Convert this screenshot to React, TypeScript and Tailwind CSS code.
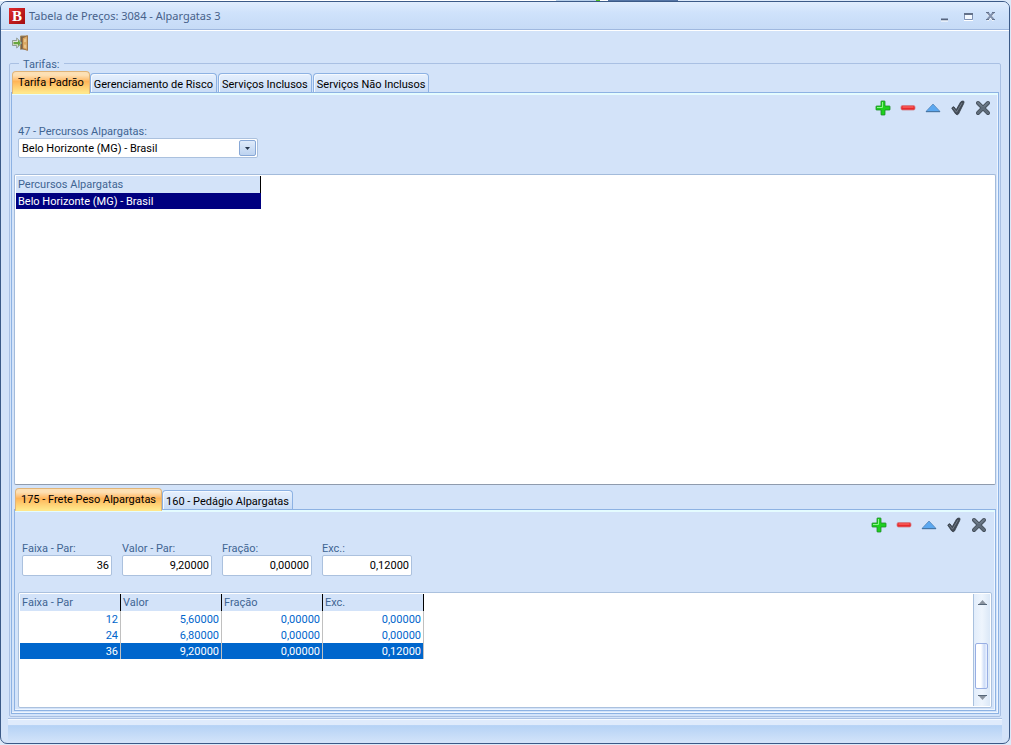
import { useState } from 'react'
import { clsx } from 'clsx'

const mainTabs = ['Tarifa Padrão', 'Gerenciamento de Risco', 'Serviços Inclusos', 'Serviços Não Inclusos']
const priceTabs = ['175 - Frete Peso Alpargatas', '160 - Pedágio Alpargatas']

const routes = ['Belo Horizonte (MG) - Brasil']

const columns = ['Faixa - Par', 'Valor', 'Fração', 'Exc.']
const rates = [
  ['12', '5,60000', '0,00000', '0,00000'],
  ['24', '6,80000', '0,00000', '0,00000'],
  ['36', '9,20000', '0,00000', '0,12000'],
]

const fields = [
  { id: 'faixa', label: 'Faixa - Par:' },
  { id: 'valor', label: 'Valor - Par:' },
  { id: 'fracao', label: 'Fração:' },
  { id: 'exc', label: 'Exc.:' },
]

function DoorIcon() {
  return (
    <svg width="18" height="16" viewBox="0 0 18 16">
      <path d="M8.500 14.500V1H15v13.500" fill="#6f6455" stroke="#a98a5c" />
      <path d="M10.500 3 15.500.6V15.400L10.500 13.500Z" fill="#d9a763" stroke="#96683a" strokeWidth=".8" />
      <path d="M12 4.200 14.200 3.300v3.500L12 7.200ZM12 9.500l2.200.3v3.400L12 12.400Z" fill="#e9c48c" />
      <path d="M.5 5.500h4.200V3L10 8l-5.300 5v-2.500H.5Z" fill="#dfe3d6" stroke="#7d8a80" strokeWidth=".8" />
      <path d="M1.500 7h4.500V4.800L9 8l-3 3.200V9.200H1.500Z" fill="#67a63f" />
    </svg>
  )
}

function PlusIcon() {
  return (
    <svg width="16" height="16" viewBox="0 0 16 16">
      <path
        d="M6.500 1h3q.5 0 .5.500V6h4.500q.5 0 .5.500v3q0 .5-.5.500H10v4.500q0 .5-.5.500h-3q-.5 0-.5-.5V10H1.500q-.5 0-.5-.5v-3q0-.5.500-.5H6V1.500q0-.5.500-.5Z"
        fill="#1fd01f"
        stroke="#1e8a28"
        strokeWidth=".8"
      />
      <path d="M7.500 2v5.500H2" fill="none" stroke="#8df58a" />
    </svg>
  )
}

function MinusIcon() {
  return (
    <svg width="16" height="16" viewBox="0 0 16 16">
      <rect x="1" y="5.500" width="14" height="4.500" rx="1.500" fill="#e8292b" stroke="#d07f88" strokeWidth=".8" />
      <path d="M2.500 7h11" stroke="#ff7a76" />
    </svg>
  )
}

function UpIcon() {
  return (
    <svg width="16" height="16" viewBox="0 0 16 16">
      <path d="M8 4 15 11.500H1Z" fill="#5ba8f0" stroke="#5787b8" strokeWidth=".8" />
      <path d="M1 11.700h14" stroke="#41719f" />
    </svg>
  )
}

function CheckIcon() {
  return (
    <svg width="16" height="16" viewBox="0 0 16 16">
      <path
        d="M1.800 8.300q.7-1.800 2.200-1.500l2.200 3L10.600 2q1.200-1.400 3.200-.8.600.8-.2 2.500L8.500 14q-1.300 1.600-2.800 0Z"
        fill="#434c57"
        stroke="#353e48"
        strokeWidth=".8"
        strokeLinejoin="round"
      />
      <path d="m3.200 8 3.300 4.200L12 3" fill="none" stroke="#7c8794" strokeWidth=".8" />
    </svg>
  )
}

function CrossIcon() {
  return (
    <svg width="16" height="16" viewBox="0 0 16 16">
      <path d="m3 3 10 10M13 3 3 13" stroke="#3f4954" strokeWidth="4" strokeLinecap="round" />
      <path d="m3 3 10 10M13 3 3 13" stroke="#5f6c7a" strokeWidth="2.600" strokeLinecap="round" />
      <path d="m3 2.500 4 4M13 2.500l-4 4" stroke="#8592a0" strokeWidth=".8" />
    </svg>
  )
}

const actions = [
  { label: 'Adicionar', Icon: PlusIcon },
  { label: 'Remover', Icon: MinusIcon },
  { label: 'Editar', Icon: UpIcon },
  { label: 'Confirmar', Icon: CheckIcon },
  { label: 'Cancelar', Icon: CrossIcon },
]

function ActionBar() {
  return (
    <div className="flex justify-end gap-[9px] pt-[7px] pr-[5px]">
      {actions.map(({ label, Icon }) => (
        <button key={label} type="button" aria-label={label}>
          <Icon />
        </button>
      ))}
    </div>
  )
}

interface TabsProps {
  items: string[]
  active: number
  onSelect: (index: number) => void
}

function Tabs({ items, active, onSelect }: TabsProps) {
  return (
    <div role="tablist" className="relative z-10 flex items-end pl-px">
      {items.map((item, index) => (
        <button
          key={item}
          type="button"
          role="tab"
          aria-selected={index === active}
          onClick={() => onSelect(index)}
          className={clsx(
            'rounded-t-sm border text-black whitespace-nowrap',
            index === active
              ? '-mb-[2px] h-[23px] border-[#e0b478] border-b-[#ffe68a] bg-linear-to-b from-[#fde0b4] from-15% via-[#ffb558] via-45% to-[#ffe98c] px-[5px] pb-px'
              : 'mr-px h-[19px] border-[#8db2e3] border-b-0 bg-linear-to-b from-[#e6f0fd] to-[#c9dcf6] px-[3px] pt-[2px] shadow-[inset_1px_1px_0_#f4f9ff]'
          )}
        >
          {item}
        </button>
      ))}
    </div>
  )
}

function WindowButtons() {
  return (
    <div className="flex items-center gap-[9px] pr-[11px]">
      <button type="button" aria-label="Minimizar">
        <svg width="14" height="14" viewBox="0 0 14 14">
          <path d="M3 10.500h7" stroke="#56657f" strokeWidth="2" />
          <path d="M3 12h7" stroke="#fff" />
        </svg>
      </button>
      <button type="button" aria-label="Maximizar">
        <svg width="14" height="14" viewBox="0 0 14 14">
          <path d="M3 5h9" stroke="#637189" strokeWidth="2" />
          <path d="M3.500 6v4.500h8V6" fill="#f4f9ff" stroke="#8193b4" />
          <path d="M3 11.500h9" stroke="#fff" />
        </svg>
      </button>
      <button type="button" aria-label="Fechar">
        <svg width="14" height="14" viewBox="0 0 14 14">
          <path d="m3.500 4.500 6 7m0-7-6 7" stroke="#fff" strokeWidth="2" />
          <path d="m3.500 3.500 6 7m0-7-6 7" stroke="#8291ad" strokeWidth="2" />
          <path d="M2 3.500h3m3 0h3M2 10.500h3m3 0h3" stroke="#65738d" />
        </svg>
      </button>
    </div>
  )
}

function RouteTable() {
  return (
    <table className="w-[245px] table-fixed border-separate border-spacing-0 text-left">
      <thead>
        <tr className="h-[17px] bg-[#d3e3f9] text-[#3f6593]">
          <th className="border-r border-black px-[2px] pt-px pb-0 leading-4 font-normal">Percursos Alpargatas</th>
        </tr>
      </thead>
      <tbody>
        {routes.map(route => (
          <tr key={route} className="h-4 bg-[#000080] text-white">
            <td className="px-[2px] pt-[2px] pb-0 leading-[14px]">{route}</td>
          </tr>
        ))}
      </tbody>
    </table>
  )
}

interface RateTableProps {
  selected: number
  onSelect: (index: number) => void
}

function RateTable({ selected, onSelect }: RateTableProps) {
  return (
    <table className="w-[404px] table-fixed border-separate border-spacing-0">
      <thead>
        <tr className="h-[17px] bg-[#d3e3f9] text-left text-[#3f6593]">
          {columns.map(column => (
            <th key={column} className="border-r border-black px-[2px] pt-px pb-0 leading-4 font-normal">{column}</th>
          ))}
        </tr>
      </thead>
      <tbody>
        {rates.map((row, index) => (
          <tr
            key={row[0]}
            onClick={() => onSelect(index)}
            className={clsx('h-4 text-right', index === selected ? 'bg-[#0066cc] text-white' : 'text-[#0066cc]')}
          >
            {row.map((value, i) => (
              <td key={i} className="border-r border-[#c0c0c0] px-[2px] pt-[2px] pb-0 leading-[14px]">{value}</td>
            ))}
          </tr>
        ))}
      </tbody>
    </table>
  )
}

function ScrollBar() {
  return (
    <div className="flex w-[17px] flex-col items-center border-l border-[#a9c1de] bg-linear-to-r from-[#e2edfb] via-[#eef5fd] to-[#dbe8f7]">
      <button type="button" aria-label="Rolar para cima" className="flex h-4 w-full items-center justify-center">
        <svg width="9" height="5" viewBox="0 0 9 5">
          <path d="M4.500 0 9 5H0Z" fill="#8b949f" />
          <path d="M0 4.500h9" stroke="#566779" />
        </svg>
      </button>
      <div className="flex w-full flex-1 flex-col justify-end pr-[2px] pl-px">
        <div className="h-[46px] rounded-[2px] border border-[#98aee3] bg-linear-to-r from-white from-45% via-[#cddcf7] via-75% to-[#eef4ff]" />
      </div>
      <button type="button" aria-label="Rolar para baixo" className="flex h-[17px] w-full items-center justify-center">
        <svg width="9" height="5" viewBox="0 0 9 5">
          <path d="M4.500 5 9 0H0Z" fill="#8b949f" />
          <path d="M0 .5h9" stroke="#566779" />
        </svg>
      </button>
    </div>
  )
}

export default function App() {
  const [mainTab, setMainTab] = useState(0)
  const [priceTab, setPriceTab] = useState(0)
  const [selected, setSelected] = useState(2)

  return (
    <div className="flex min-h-screen flex-col bg-[#dce9f9] pr-px pb-px font-[Roboto,'Liberation_Sans',sans-serif] text-[11px] leading-[13px]">
      <div className="flex h-px bg-white">
        <div className="ml-[55%] w-10 bg-[#b8d0ea]" />
        <div className="w-1 bg-[#4cc020]" />
        <div className="ml-2 w-[70px] bg-[#5575a5]" />
        <div className="flex-1 bg-[#dce9f9]" />
      </div>

      <div className="flex flex-1 flex-col overflow-hidden rounded-[7px] border border-[#3b5a87] bg-[#d3e3f9]">
        {/* Title bar */}
        <header className="flex h-7 items-center justify-between border-b border-[#9fb8df] bg-linear-to-b from-[#e0edfd] via-[#cfe2fb] via-40% to-[#c6dbf6] pl-2">
          <div className="flex items-center gap-1 pt-px">
            <div className="flex size-4 items-center justify-center bg-linear-to-br from-[#e02a2c] to-[#a30c10] font-['Liberation_Serif',serif] text-[15px] leading-4 font-bold text-white">
              B
            </div>
            <h1 className="font-['Noto_Sans','Open_Sans',sans-serif] text-[11px] leading-4 text-[#47618a]">
              Tabela de Preços: 3084 - Alpargatas 3
            </h1>
          </div>
          <WindowButtons />
        </header>

        {/* Toolbar */}
        <div className="flex h-[27px] items-start border-t border-white pt-1 pl-[11px]">
          <button type="button" aria-label="Sair">
            <DoorIcon />
          </button>
        </div>

        <div className="flex flex-1 flex-col px-2 pt-[6px]">
          <div
            role="group"
            aria-labelledby="tarifas"
            className="flex flex-1 flex-col rounded-[2px] border border-[#a9c0e3] px-px pb-[2px]"
          >
            <h2 id="tarifas" className="-mt-[6px] ml-2 self-start bg-[#d3e3f9] px-1 text-[#3f6593]">Tarifas:</h2>

            <Tabs items={mainTabs} active={mainTab} onSelect={setMainTab} />

            <main className="flex flex-1 flex-col border border-[#8db2e3] px-[2px] pb-[2px] shadow-[inset_0_2px_0_#e4fcff,inset_-1px_-1px_0_#edf5ff]">
              <ActionBar />
              <div className="mt-[9px] mb-4 flex flex-col items-start pl-1">
                <label htmlFor="percurso" className="text-[#3f6593]">47 - Percursos Alpargatas:</label>
                <div className="relative">
                  <select
                    id="percurso"
                    className="block h-5 w-60 appearance-none rounded-[2px] border border-[#abc1de] bg-white pr-5 pl-[3px] text-black"
                  >
                    {routes.map(route => (
                      <option key={route}>{route}</option>
                    ))}
                  </select>
                  <span className="pointer-events-none absolute top-[2px] right-[2px] flex h-4 w-[17px] items-center justify-center rounded-[2px] border border-[#88a8d6] bg-linear-to-b from-[#dfebfb] to-[#bdd3f0]">
                    <svg width="5" height="3" viewBox="0 0 5 3">
                      <path d="M0 0h5L2.500 3Z" fill="#27364d" />
                    </svg>
                  </span>
                </div>
              </div>

              <div className="min-h-40 flex-1 rounded-[2px] border border-[#a3bbdb] border-b-[#8f9bad] bg-white p-px">
                <RouteTable />
              </div>

              <div className="mt-[3px]">
                <Tabs items={priceTabs} active={priceTab} onSelect={setPriceTab} />
                <section className="border border-[#8db2e3] px-[3px] pb-[2px] shadow-[inset_0_2px_0_#e4fcff,inset_-1px_-1px_0_#edf5ff]">
                  <ActionBar />
                  <div className="mt-[9px] mb-4 flex gap-[10px] pl-1">
                    {fields.map(({ id, label }, index) => (
                      <div key={id} className="flex flex-col">
                        <label htmlFor={id} className="text-[#3f6593]">{label}</label>
                        <input
                          id={id}
                          readOnly
                          value={rates[selected][index]}
                          className="h-[21px] w-[90px] rounded-[2px] border border-[#abc1de] bg-white px-[2px] text-right text-black"
                        />
                      </div>
                    ))}
                  </div>

                  <div className="flex min-h-[116px] rounded-[2px] border border-[#abc1de] bg-white p-px">
                    <div className="flex-1">
                      <RateTable selected={selected} onSelect={setSelected} />
                    </div>
                    <ScrollBar />
                  </div>
                </section>
              </div>
            </main>
          </div>
        </div>

        {/* Status bar */}
        <footer className="mx-[7px] mt-px mb-[2px] h-[23px] border-t border-[#a9c0e3] bg-linear-to-b from-[#dfebfc] from-25% via-[#b5d2f5] via-30% to-[#d0e2f9] shadow-[inset_0_1px_0_#f4f9ff]" />
      </div>
    </div>
  )
}
